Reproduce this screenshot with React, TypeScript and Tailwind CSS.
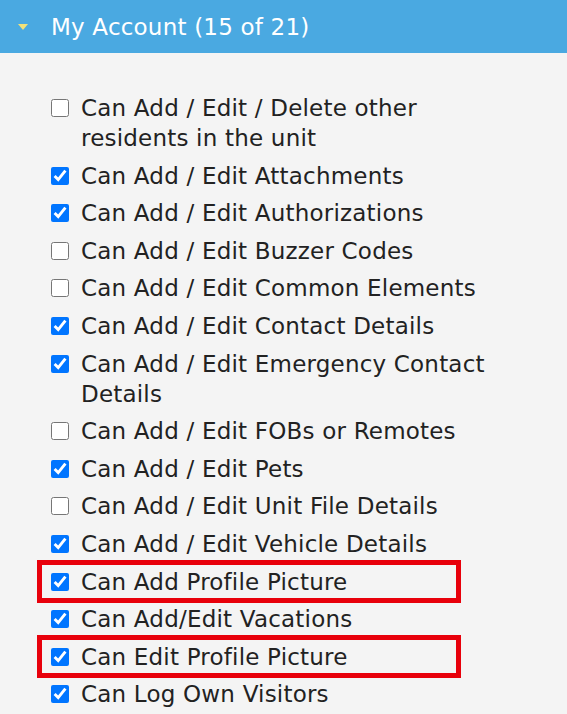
import React from "react";

const items: { label: string; checked: boolean; highlight?: boolean }[] = [
  { label: "Can Add / Edit / Delete other residents in the unit", checked: false },
  { label: "Can Add / Edit Attachments", checked: true },
  { label: "Can Add / Edit Authorizations", checked: true },
  { label: "Can Add / Edit Buzzer Codes", checked: false },
  { label: "Can Add / Edit Common Elements", checked: false },
  { label: "Can Add / Edit Contact Details", checked: true },
  { label: "Can Add / Edit Emergency Contact Details", checked: true },
  { label: "Can Add / Edit FOBs or Remotes", checked: false },
  { label: "Can Add / Edit Pets", checked: true },
  { label: "Can Add / Edit Unit File Details", checked: false },
  { label: "Can Add / Edit Vehicle Details", checked: true },
  { label: "Can Add Profile Picture", checked: true, highlight: true },
  { label: "Can Add/Edit Vacations", checked: true },
  { label: "Can Edit Profile Picture", checked: true, highlight: true },
  { label: "Can Log Own Visitors", checked: true },
];

export default function App() {
  return (
    <div
      className="w-[567px] h-[714px] overflow-hidden bg-[#f4f4f4]"
      style={{ fontFamily: '"DejaVu Sans", Verdana, sans-serif' }}
    >
      <div className="h-[53px] bg-[#4aa9e1] flex items-center pl-[18px]">
        <svg width="10" height="6" viewBox="0 0 10 6" className="mr-[23px]">
          <polygon points="0,0 10,0 5,6" fill="#f2e27a" />
        </svg>
        <span className="text-white text-[23px] tracking-[0.2px] leading-none pt-[1px]">
          My Account (15 of 21)
        </span>
      </div>
      <div className="pt-[40px] pl-[51px] pr-[50px] flex flex-col gap-[7.6px]">
        {items.map((it) => (
          <div key={it.label} className="relative flex items-start">
            {it.highlight && (
              <span className="absolute -left-[14px] w-[424px] -top-[7px] -bottom-[6px] border-[5px] border-[#e8000b] pointer-events-none" />
            )}
            <input
              type="checkbox"
              defaultChecked={it.checked}
              className="w-[18px] h-[18px] mt-[6px] mr-[12px] shrink-0 accent-[#0075ff]"
            />
            <span className="text-[23px] tracking-[0.2px] leading-[30px] text-[#222]">
              {it.label}
            </span>
          </div>
        ))}
      </div>
    </div>
  );
}
